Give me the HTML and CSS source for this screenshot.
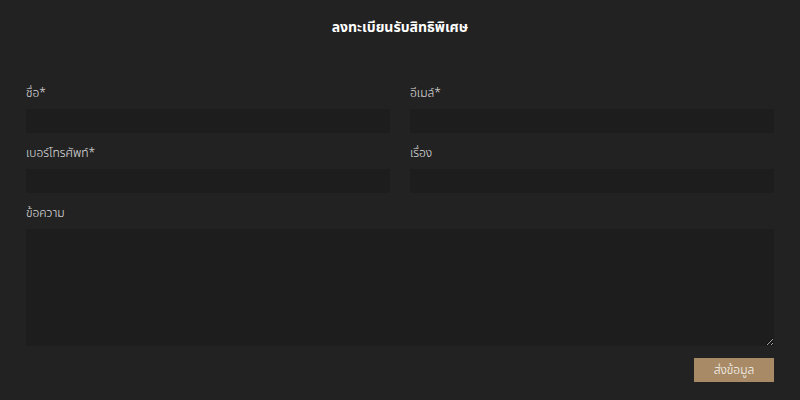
FILE: index.html
```html
<!DOCTYPE html>
<html lang="th">
<head>
<meta charset="utf-8">
<link rel="stylesheet" href="styles.css">
</head>
<body>
<div class="page">
  <h1 class="title">ลงทะเบียนรับสิทธิพิเศษ</h1>
  <form class="form">
    <div class="field">
      <label class="label">ชื่อ*</label>
      <input class="input" type="text">
    </div>
    <div class="field">
      <label class="label">อีเมล์*</label>
      <input class="input" type="text">
    </div>
    <div class="field">
      <label class="label">เบอร์โทรศัพท์*</label>
      <input class="input" type="text">
    </div>
    <div class="field">
      <label class="label">เรื่อง</label>
      <input class="input" type="text">
    </div>
    <div class="field wide">
      <label class="label">ข้อความ</label>
      <textarea class="textarea"></textarea>
    </div>
    <div class="actions wide">
      <button class="button" type="button">ส่งข้อมูล</button>
    </div>
  </form>
</div>
</body>
</html>
```
FILE: styles.css
```css
html, body {
  margin: 0;
  padding: 0;
  background: #222222;
}
body {
  font-family: "Noto Sans Thai", "Noto Sans", "DejaVu Sans", sans-serif;
  color: #e6e6e6;
}
.page {
  width: 748px;
  margin: 0 auto;
  padding-top: 18px;
}
.title {
  margin: 0;
  font-size: 14px;
  line-height: 20px;
  font-weight: 700;
  color: #ffffff;
  text-align: center;
}
.form {
  margin-top: 47px;
  display: grid;
  grid-template-columns: 1fr 1fr;
  column-gap: 20px;
  row-gap: 12px;
}
.field {
  display: flex;
  flex-direction: column;
}
.wide {
  grid-column: 1 / 3;
}
.label {
  font-size: 12px;
  font-weight: 300;
  line-height: 16px;
  height: 16px;
  margin-bottom: 8px;
  color: #e0e0e0;
}
.input, .textarea {
  box-sizing: border-box;
  background: #1d1d1d;
  border: none;
  outline: none;
  margin: 0;
  padding: 4px 8px;
  color: #ddd;
  font-family: inherit;
}
.input {
  height: 24px;
}
.textarea {
  height: 117px;
  resize: vertical;
}
.actions {
  display: flex;
  justify-content: flex-end;
}
.button {
  width: 80px;
  height: 24px;
  border: none;
  background: #a88b66;
  color: #ffffff;
  font-family: inherit;
  font-size: 12px;
  font-weight: 300;
  padding: 0;
  cursor: pointer;
}
```
